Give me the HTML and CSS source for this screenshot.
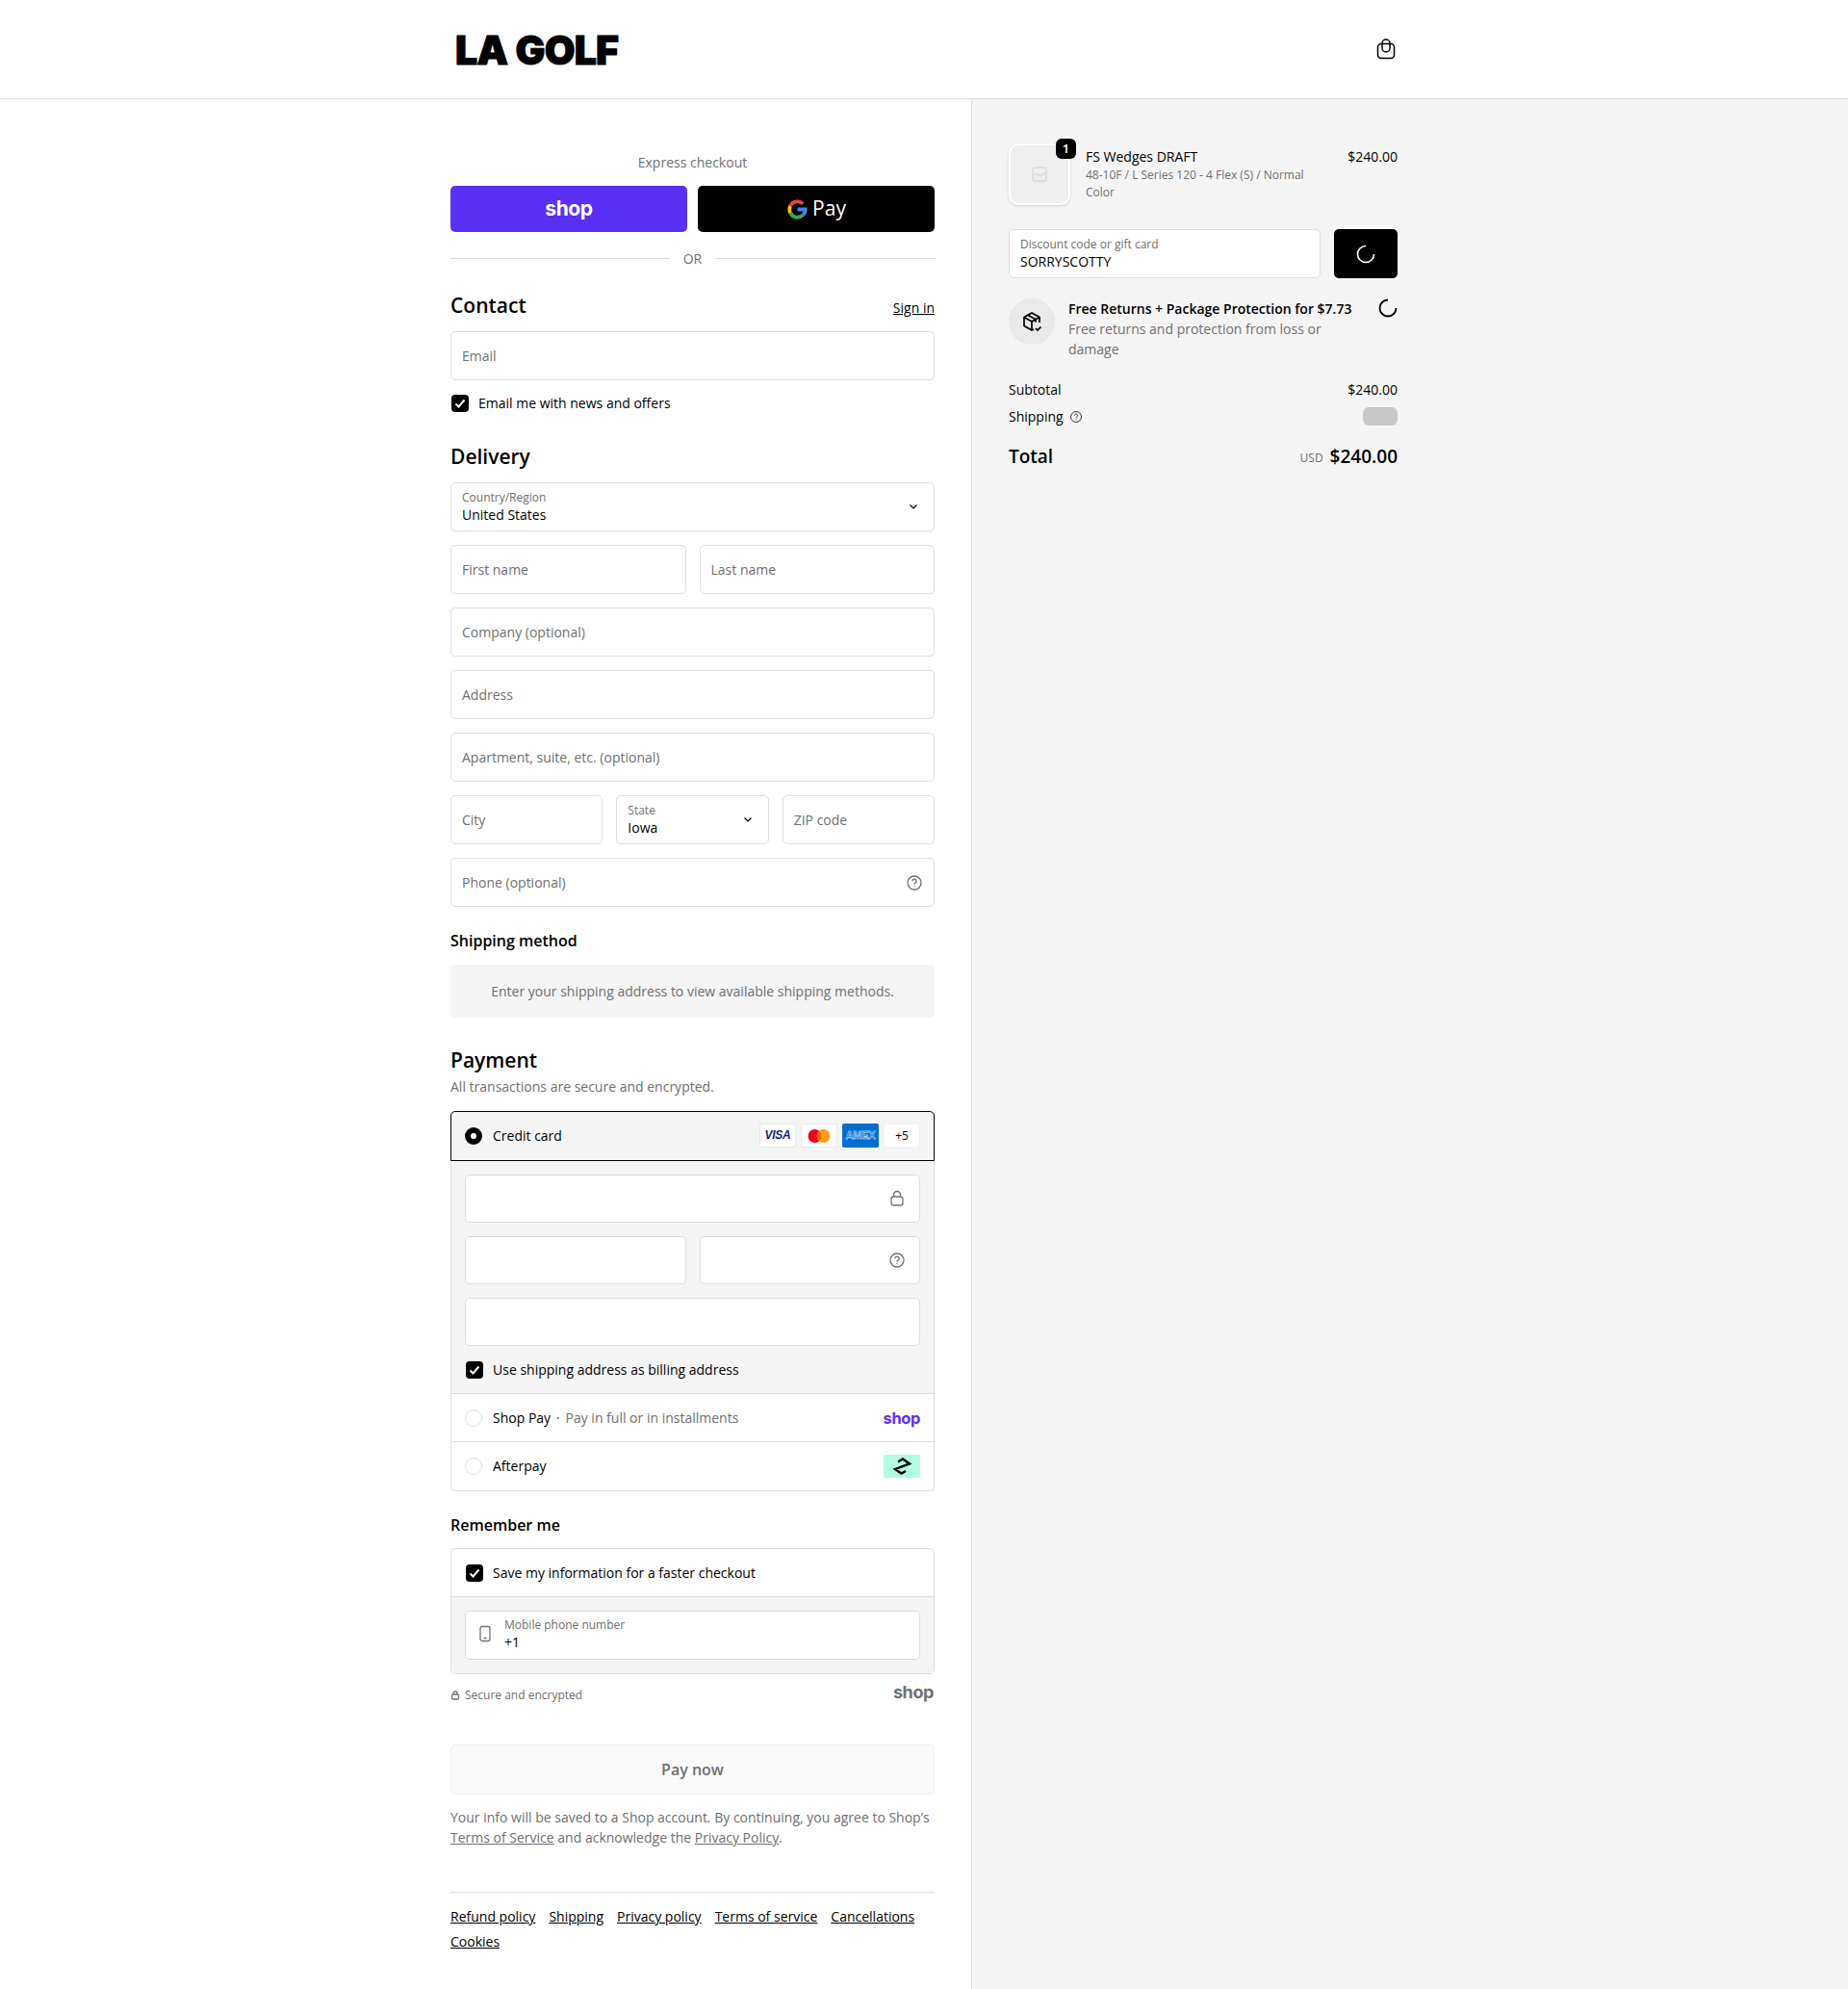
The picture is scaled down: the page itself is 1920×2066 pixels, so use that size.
FILE: index.html
```html
<!DOCTYPE html>
<html>
  <head>
    <title>Checkout - LA GOLF</title>
    <link rel="stylesheet" href="styles.css">
  </head>
  <body>
    <header class="top-bar">
      <div class="logo">LA GOLF</div>
      <svg class="bag-icon" viewBox="0 0 22 22" fill="none" stroke="#000" stroke-width="1.5">
        <rect x="2.5" y="5.5" width="17" height="15" rx="3.5"/>
        <path d="M7 10V5a4 4 0 0 1 8 0v5a4 4 0 0 1-8 0"/>
      </svg>
    </header>

    <div class="page">
      <main class="checkout">
        <p class="express-title">Express checkout</p>
        <div class="express-buttons">
          <div class="express-btn shop-btn"><span class="shop-word">shop</span></div>
          <div class="express-btn gpay-btn">
            <svg class="g-mark" viewBox="0 0 24 24" fill="none" stroke-width="4">
              <path d="M12 12h8.500a8.600 8.600 0 0 1-2.600 6.200" stroke="#4285f4"/>
              <path d="M17.900 18.200A8.600 8.600 0 0 1 4.300 15.800" stroke="#34a853"/>
              <path d="M4.300 15.800a8.600 8.600 0 0 1 0-7.600" stroke="#fbbc05"/>
              <path d="M4.300 8.200A8.600 8.600 0 0 1 18 6" stroke="#ea4335"/>
            </svg>
            <span class="gpay-word">Pay</span>
          </div>
        </div>
        <div class="or-row"><span>OR</span></div>

        <div class="section-head contact-head">
          <h2>Contact</h2>
          <a class="sign-in" href="#">Sign in</a>
        </div>
        <div class="field">Email</div>
        <div class="check-row news-row">
          <span class="check"><svg viewBox="0 0 18 18" fill="none" stroke="#fff" stroke-width="2"><path d="M4.500 9.500l3 3 6-7"/></svg></span>
          Email me with news and offers
        </div>

        <h2 class="delivery-head">Delivery</h2>
        <div class="stack">
          <div class="field field-filled">
            <div><small>Country/Region</small><b>United States</b></div>
            <svg class="chevron" viewBox="0 0 14 14" fill="none" stroke="#000" stroke-width="1.200"><path d="M3.500 5.500L7 9l3.500-3.500"/></svg>
          </div>
          <div class="cols-2">
            <div class="field">First name</div>
            <div class="field">Last name</div>
          </div>
          <div class="field">Company (optional)</div>
          <div class="field">Address</div>
          <div class="field">Apartment, suite, etc. (optional)</div>
          <div class="cols-3">
            <div class="field">City</div>
            <div class="field field-filled">
              <div><small>State</small><b>Iowa</b></div>
              <svg class="chevron" viewBox="0 0 14 14" fill="none" stroke="#000" stroke-width="1.200"><path d="M3.500 5.500L7 9l3.500-3.500"/></svg>
            </div>
            <div class="field">ZIP code</div>
          </div>
          <div class="field field-icon">
            Phone (optional)
            <svg class="field-svg" viewBox="0 0 18 18" fill="none" stroke="#707070" stroke-width="1.300"><circle cx="9" cy="9" r="7"/><path d="M6.900 7.200a2.100 2.100 0 1 1 3.200 1.800c-.7.400-1.100.9-1.100 1.700"/><path d="M9 12.200v1.100"/></svg>
          </div>
        </div>

        <h3 class="shipping-head">Shipping method</h3>
        <div class="shipping-note">Enter your shipping address to view available shipping methods.</div>

        <h2 class="payment-head">Payment</h2>
        <p class="muted payment-sub">All transactions are secure and encrypted.</p>

        <div class="pay-box">
          <div class="pay-row pay-row-active">
            <span class="radio radio-on"></span>
            <span class="pay-label">Credit card</span>
            <div class="brands">
              <span class="brand visa">VISA</span>
              <span class="brand">
                <svg class="mc" viewBox="0 0 24 16"><circle cx="7.500" cy="8" r="7" fill="#eb001b"/><circle cx="16.500" cy="8" r="7" fill="#f79e1b"/><path d="M12 2.600a7 7 0 0 1 0 10.800 7 7 0 0 1 0-10.800" fill="#ff5f00"/></svg>
              </span>
              <span class="brand amex">AMEX</span>
              <span class="brand more">+5</span>
            </div>
          </div>
          <div class="card-panel">
            <div class="card-field">
              <svg class="field-svg" viewBox="0 0 18 18" fill="none" stroke="#707070" stroke-width="1.300"><rect x="3" y="7" width="12" height="9" rx="2.500"/><path d="M5.500 7V5a3.500 3.500 0 0 1 7 0v2"/></svg>
            </div>
            <div class="cols-2">
              <div class="card-field"></div>
              <div class="card-field">
                <svg class="field-svg" viewBox="0 0 18 18" fill="none" stroke="#707070" stroke-width="1.300"><circle cx="9" cy="9" r="7"/><path d="M6.900 7.200a2.100 2.100 0 1 1 3.200 1.800c-.7.400-1.100.9-1.100 1.700"/><path d="M9 12.200v1.100"/></svg>
              </div>
            </div>
            <div class="card-field"></div>
            <div class="check-row billing-row">
              <span class="check"><svg viewBox="0 0 18 18" fill="none" stroke="#fff" stroke-width="2"><path d="M4.500 9.500l3 3 6-7"/></svg></span>
              Use shipping address as billing address
            </div>
          </div>
          <div class="pay-row">
            <span class="radio"></span>
            <span class="pay-label">Shop Pay</span>
            <span class="dot">&bull;</span>
            <span class="muted">Pay in full or in installments</span>
            <span class="shop-word shop-purple">shop</span>
          </div>
          <div class="pay-row pay-row-last">
            <span class="radio"></span>
            <span class="pay-label">Afterpay</span>
            <span class="afterpay">
              <svg viewBox="0 0 24 18" fill="none" stroke="#000" stroke-width="2.400"><path d="M8 4.500l5-3 7 5-15 5.500 6.500 4.500L16 14"/></svg>
            </span>
          </div>
        </div>

        <h3 class="remember-head">Remember me</h3>
        <div class="remember-box">
          <div class="check-row save-row">
            <span class="check"><svg viewBox="0 0 18 18" fill="none" stroke="#fff" stroke-width="2"><path d="M4.500 9.500l3 3 6-7"/></svg></span>
            Save my information for a faster checkout
          </div>
          <div class="remember-panel">
            <div class="card-field phone-field">
              <svg class="phone-svg" viewBox="0 0 14 18" fill="none" stroke="#707070" stroke-width="1.300"><rect x="2" y="1.500" width="10" height="15" rx="2"/><path d="M5.500 13.500h3"/></svg>
              <div class="phone-text"><small>Mobile phone number</small><b>+1</b></div>
            </div>
          </div>
        </div>
        <div class="secure-row">
          <span class="secure-text">
            <svg viewBox="0 0 10 10" fill="none" stroke="#707070" stroke-width="1.300"><rect x="1.500" y="4" width="7" height="5" rx="1.300"/><path d="M3 4V3a2 2 0 0 1 4 0v1"/></svg>
            Secure and encrypted
          </span>
          <span class="shop-word shop-gray">shop</span>
        </div>

        <div class="pay-now">Pay now</div>
        <p class="muted legal">Your info will be saved to a Shop account. By continuing, you agree to Shop&rsquo;s <a href="#">Terms of Service</a> and acknowledge the <a href="#">Privacy Policy</a>.</p>

        <footer class="policy-links">
          <a href="#">Refund policy</a>
          <a href="#">Shipping</a>
          <a href="#">Privacy policy</a>
          <a href="#">Terms of service</a>
          <a href="#">Cancellations</a>
          <a href="#">Cookies</a>
        </footer>
      </main>

      <aside class="summary">
        <div class="summary-inner">
          <div class="line-item">
            <div class="thumb">
              <svg viewBox="0 0 18 18" fill="none" stroke="#dcdcdc" stroke-width="1.500"><rect x="2" y="2" width="14" height="14" rx="3"/><path d="M2 10c3-3 4-1 6 0s4 1 8-3"/></svg>
              <span class="badge">1</span>
            </div>
            <div class="item-text">
              <div>FS Wedges DRAFT</div>
              <div class="variant">48-10F / L Series 120 - 4 Flex (S) / Normal Color</div>
            </div>
            <div>$240.00</div>
          </div>

          <div class="discount">
            <div class="discount-field"><small>Discount code or gift card</small><b>SORRYSCOTTY</b></div>
            <div class="discount-btn">
              <svg class="spinner" viewBox="0 0 20 20" fill="none" stroke="#fff" stroke-width="1.600"><path d="M10 1.500A8.500 8.500 0 1 0 18.500 10"/></svg>
            </div>
          </div>

          <div class="upsell">
            <div class="upsell-icon">
              <svg viewBox="0 0 24 24" fill="none" stroke="#000" stroke-width="1.700"><path d="M20 13V7.500L12 3 4 7.500v9L12 21l2-1"/><path d="M4 7.500L12 12l8-4.500M12 12v9M8 5.300l8 4.500v3"/><path d="M16 19l2 2 3.500-3.500"/></svg>
            </div>
            <div class="upsell-text">
              <strong>Free Returns + Package Protection for $7.73</strong>
              <span class="muted">Free returns and protection from loss or damage</span>
            </div>
            <svg class="spinner upsell-spin" viewBox="0 0 20 20" fill="none" stroke="#000" stroke-width="1.800"><path d="M10 1.500A8.500 8.500 0 1 0 18.500 10"/></svg>
          </div>

          <div class="cost-row subtotal"><span>Subtotal</span><span>$240.00</span></div>
          <div class="cost-row shipping">
            <span class="ship-label">Shipping
              <svg viewBox="0 0 14 14" fill="none" stroke="#333" stroke-width="1"><circle cx="7" cy="7" r="5.500"/><path d="M5.400 5.600a1.600 1.600 0 1 1 2.400 1.400c-.5.300-.8.700-.8 1.200"/><path d="M7 9.500v.8"/></svg>
            </span>
            <span class="skeleton"></span>
          </div>
          <div class="cost-row total">
            <strong>Total</strong>
            <span class="total-price"><small>USD</small><strong>$240.00</strong></span>
          </div>
        </div>
      </aside>
    </div>
  </body>
</html>
```

FILE: styles.css
```css
* {
  box-sizing: border-box;
}

body {
  margin: 0;
  font-family: "Open Sans", "Noto Sans", sans-serif;
  font-size: 14px;
  line-height: 21px;
  color: #000;
  background: #fff;
}

h2, h3, p {
  margin: 0;
}

small {
  display: block;
  font-size: 12px;
  line-height: 17px;
  color: #707070;
}

b {
  display: block;
  font-weight: 400;
  line-height: 19px;
}

a {
  color: inherit;
}

.muted {
  color: #707070;
}

/* header */
.top-bar {
  height: 103px;
  padding: 0 468px;
  display: flex;
  align-items: center;
  justify-content: space-between;
  border-bottom: 1px solid #dedede;
}

.logo {
  margin-left: 5px;
  padding-top: 2px;
  font-family: Inter, "Liberation Sans", sans-serif;
  font-weight: 900;
  font-size: 41px;
  line-height: 1;
  letter-spacing: -.8px;
  word-spacing: 1px;
  -webkit-text-stroke: 1px #000;
}

.bag-icon {
  width: 22px;
  height: 22px;
  margin-right: 1px;
}

/* two sides */
.page {
  display: grid;
  grid-template-columns: 1009px 1fr;
  min-height: 1963px;
}

.checkout {
  padding: 55px 38px 0 468px;
}

.summary {
  background: #f5f5f5;
  border-left: 1px solid #dedede;
  padding: 46px 0 0 38px;
}

.summary-inner {
  width: 404px;
}

/* express */
.express-title {
  text-align: center;
  color: #707070;
}

.express-buttons {
  margin-top: 14px;
  display: grid;
  grid-template-columns: 1fr 1fr;
  gap: 11px;
}

.express-btn {
  height: 48px;
  border-radius: 5px;
  display: flex;
  align-items: center;
  justify-content: center;
}

.shop-btn {
  background: #5a31f4;
}

.gpay-btn {
  background: #000;
  color: #fff;
}

.shop-word {
  font-family: Inter, "Noto Sans", sans-serif;
  font-weight: 700;
  font-size: 21px;
  letter-spacing: -.4px;
  color: #fff;
  line-height: 1;
  position: relative;
  top: -1px;
}

.shop-purple {
  margin-left: auto;
  color: #5a31f4;
  font-size: 16.500px;
  top: 1px;
}

.shop-gray {
  margin-right: 1px;
  color: #707070;
  font-size: 18px;
  top: -3px;
}

.g-mark {
  width: 23px;
  height: 23px;
}

.gpay-word {
  margin-left: 4px;
  font-family: "Open Sans", sans-serif;
  font-size: 21px;
  position: relative;
  top: -1px;
}

.or-row {
  margin-top: 17px;
  display: flex;
  align-items: center;
  gap: 14px;
  color: #707070;
}

.or-row::before, .or-row::after {
  content: "";
  flex: 1;
  height: 1px;
  background: #dedede;
}

/* headings */
h2 {
  font-size: 21px;
  font-weight: 600;
  line-height: 28px;
}

h3 {
  font-size: 16px;
  font-weight: 600;
  line-height: 24px;
}

.section-head {
  display: flex;
  justify-content: space-between;
  align-items: flex-end;
}

.contact-head {
  margin-top: 24px;
  margin-bottom: 13px;
}

.sign-in {
  line-height: 21px;
  margin-bottom: 1px;
}

.delivery-head {
  margin-top: 31px;
  margin-bottom: 13px;
}

.shipping-head {
  margin-top: 23px;
  margin-bottom: 13px;
}

.payment-head {
  margin-top: 30px;
}

.payment-sub {
  margin-top: 3px;
  margin-bottom: 15px;
}

.remember-head {
  margin-top: 23px;
  margin-bottom: 12px;
}

/* fields */
.stack {
  display: flex;
  flex-direction: column;
  gap: 14px;
}

.cols-2 {
  display: grid;
  grid-template-columns: 1fr 1fr;
  gap: 14px;
}

.cols-3 {
  display: grid;
  grid-template-columns: 1fr 1fr 1fr;
  gap: 14px;
}

.field {
  height: 51px;
  padding: 0 11px;
  border: 1px solid #dedede;
  border-radius: 5px;
  background: #fff;
  color: #707070;
  display: flex;
  align-items: center;
  justify-content: space-between;
}

.field-filled {
  padding-bottom: 2px;
}

.field-filled b {
  color: #000;
}

.chevron {
  width: 14px;
  height: 14px;
  margin-right: 3px;
}

.field-svg {
  width: 18px;
  height: 18px;
}

.check-row {
  display: flex;
  align-items: center;
  gap: 10px;
}

.check {
  flex: none;
  width: 18px;
  height: 18px;
  border-radius: 4px;
  background: #000;
  display: block;
}

.check svg {
  display: block;
}

.news-row {
  margin-top: 13px;
  padding-left: 1px;
}

.shipping-note {
  height: 55px;
  border-radius: 5px;
  background: #f5f5f5;
  color: #707070;
  display: flex;
  align-items: center;
  justify-content: center;
}

/* payment */
.pay-box {
  border: 1px solid #dedede;
  border-top: 0;
  border-radius: 5px;
}

.pay-row {
  height: 50px;
  padding: 0 14px;
  display: flex;
  align-items: center;
  border-top: 1px solid #dedede;
}

.pay-row-active {
  height: 52px;
  margin: 0 -1px;
  padding-bottom: 1px;
  background: #f5f5f5;
  border: 1px solid #000;
  border-radius: 5px 5px 0 0;
}

.pay-row-last {
  height: 51px;
  padding-bottom: 1px;
}

.radio {
  flex: none;
  width: 18px;
  height: 18px;
  border-radius: 50%;
  border: 1px solid #dedede;
  background: #fff;
  margin-right: 11px;
}

.radio-on {
  border: 6px solid #000;
}

.pay-label {
  color: #000;
}

.dot {
  margin: 0 6px;
  font-size: 9px;
  color: #707070;
}

.brands {
  margin-left: auto;
  display: flex;
  gap: 5px;
}

.brand {
  width: 38px;
  height: 25px;
  border: 1px solid #e9e9e9;
  border-radius: 2px;
  background: #fff;
  display: flex;
  align-items: center;
  justify-content: center;
  font-size: 12px;
}

.visa {
  font-family: "Liberation Sans", sans-serif;
  font-weight: 700;
  font-style: italic;
  font-size: 12px;
  letter-spacing: -.3px;
  color: #1a1f71;
}

.mc {
  width: 24px;
  height: 16px;
}

.amex {
  border: 0;
  background: #016fd0;
  font-family: "Liberation Sans", sans-serif;
  font-size: 11px;
  font-weight: 700;
  letter-spacing: -.3px;
  color: #016fd0;
  -webkit-text-stroke: .4px #fff;
}

.more {
  border-color: #f2f2f2;
}

.card-panel {
  padding: 14px 14px 0;
  background: #f5f5f5;
  height: 241px;
  display: flex;
  flex-direction: column;
  gap: 14px;
}

.card-field {
  height: 50px;
  padding: 0 14px;
  border: 1px solid #dedede;
  border-radius: 5px;
  background: #fff;
  display: flex;
  align-items: center;
  justify-content: flex-end;
}

.billing-row {
  padding-left: 1px;
}

.afterpay {
  margin-left: auto;
  width: 38px;
  height: 24px;
  border-radius: 2px;
  background: #b2fce4;
  display: flex;
  align-items: center;
  justify-content: center;
}

.afterpay svg {
  width: 24px;
  height: 18px;
}

/* remember */
.remember-box {
  border: 1px solid #dedede;
  border-radius: 5px;
  overflow: hidden;
}

.save-row {
  height: 50px;
  padding: 0 15px;
  border-bottom: 1px solid #dedede;
}

.remember-panel {
  padding: 14px;
  background: #f5f5f5;
}

.phone-field {
  height: 51px;
  justify-content: flex-start;
  padding: 0 13px 3px;
  gap: 13px;
}

.phone-svg {
  width: 14px;
  height: 18px;
}

.secure-row {
  margin-top: 11px;
  display: flex;
  justify-content: space-between;
  align-items: center;
}

.secure-text {
  display: flex;
  align-items: center;
  gap: 5px;
  font-size: 12px;
  color: #707070;
}

.secure-text svg {
  width: 10px;
  height: 10px;
}

.pay-now {
  margin-top: 41px;
  height: 52px;
  border: 1px solid #efefef;
  border-radius: 5px;
  background: #fafafa;
  color: #707070;
  font-size: 16px;
  font-weight: 600;
  display: flex;
  align-items: center;
  justify-content: center;
}

.legal {
  margin-top: 13px;
}

.policy-links {
  margin-top: 46px;
  padding-top: 14px;
  border-top: 1px solid #dedede;
  display: flex;
  flex-wrap: wrap;
  column-gap: 14px;
  row-gap: 5px;
}

/* summary */
.line-item {
  display: flex;
  gap: 16px;
}

.thumb {
  flex: none;
  position: relative;
  width: 64px;
  height: 64px;
  border: 2px solid #fff;
  border-radius: 10px;
  background: #efefef;
  box-shadow: 0 1px 3px rgba(0, 0, 0, .15);
  display: flex;
  align-items: center;
  justify-content: center;
}

.thumb svg {
  width: 18px;
  height: 18px;
}

.badge {
  position: absolute;
  top: -7px;
  right: -8px;
  width: 21px;
  height: 21px;
  border-radius: 6px;
  background: #000;
  color: #fff;
  font-size: 13px;
  font-weight: 600;
  line-height: 21px;
  text-align: center;
}

.item-text {
  flex: 1;
  padding-top: 3px;
}

.variant {
  width: 240px;
  font-size: 12px;
  line-height: 18px;
  color: #707070;
}

.line-item > div:last-child {
  padding-top: 3px;
}

.discount {
  margin-top: 25px;
  display: flex;
  gap: 14px;
}

.discount-field {
  flex: 1;
  height: 51px;
  padding: 6px 11px 0;
  border: 1px solid #dedede;
  border-radius: 5px;
  background: #fff;
}

.discount-btn {
  width: 66px;
  height: 51px;
  border-radius: 5px;
  background: #000;
  display: flex;
  align-items: center;
  justify-content: center;
}

.spinner {
  width: 20px;
  height: 20px;
}

.upsell {
  margin-top: 21px;
  display: flex;
  align-items: flex-start;
  gap: 14px;
}

.upsell-icon {
  flex: none;
  width: 48px;
  height: 48px;
  border-radius: 50%;
  background: #e9e9e9;
  display: flex;
  align-items: center;
  justify-content: center;
}

.upsell-icon svg {
  width: 24px;
  height: 24px;
}

.upsell-text {
  flex: 1;
}

.upsell-text strong {
  display: block;
  font-weight: 600;
}

.upsell-text .muted {
  display: block;
}

.upsell-spin {
  margin-left: 10px;
}

.cost-row {
  display: flex;
  justify-content: space-between;
  align-items: center;
}

.subtotal {
  margin-top: 21px;
}

.shipping {
  margin-top: 7px;
}

.ship-label {
  display: flex;
  align-items: center;
  gap: 6px;
}

.ship-label svg {
  width: 14px;
  height: 14px;
}

.skeleton {
  width: 36px;
  height: 19px;
  border-radius: 6px;
  background: #c8c8c8;
}

.total {
  margin-top: 17px;
}

.total strong {
  font-size: 19px;
  font-weight: 600;
  line-height: 28px;
}

.total-price {
  display: flex;
  align-items: center;
  gap: 7px;
}

.total-price small {
  padding-top: 3px;
}
```
